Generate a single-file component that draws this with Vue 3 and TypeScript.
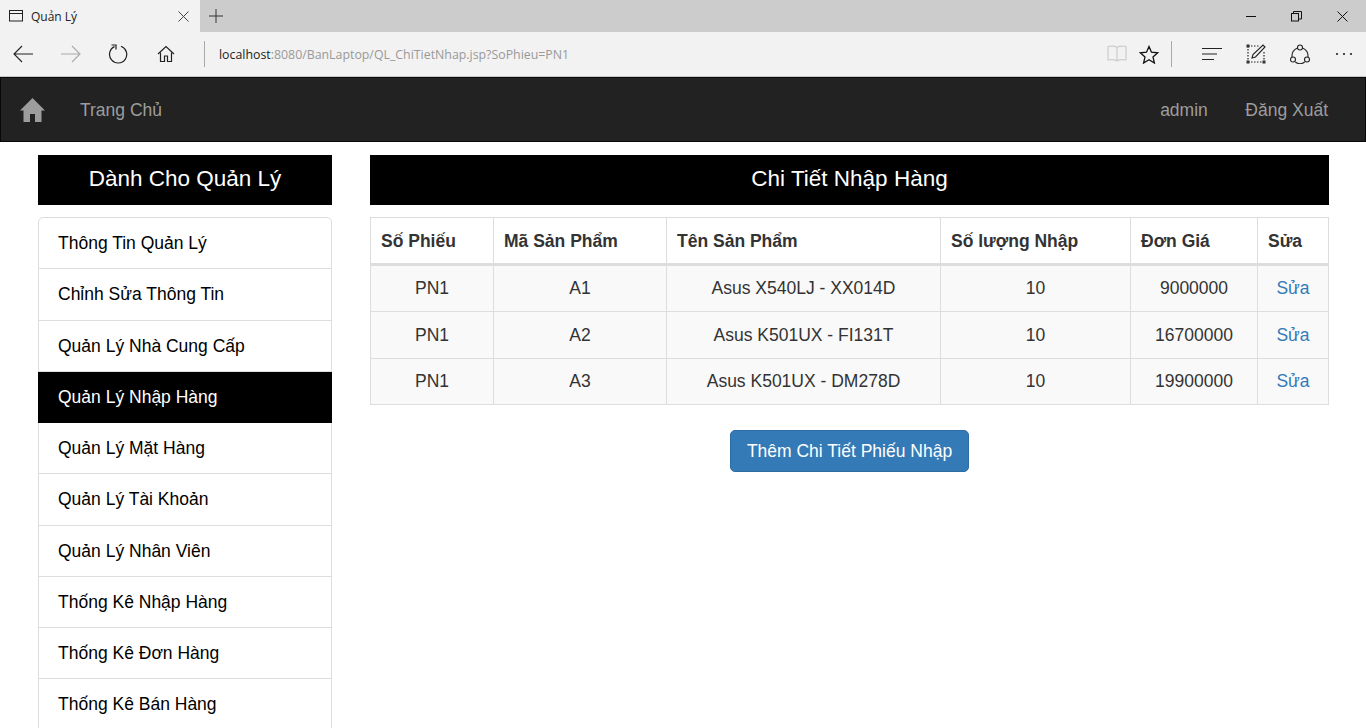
<template>
  <div class="window">
    <!-- Browser chrome -->
    <div class="tab-row">
      <div class="tab">
        <svg class="tab-icon" width="16" height="14" viewBox="0 0 16 14" fill="none" stroke="#222" stroke-width="1">
          <rect x="1.5" y="1.5" width="13" height="10.5" />
          <path d="M1.5 4.5h13" />
        </svg>
        <span class="tab-title">Quản Lý</span>
        <svg class="tab-close" width="11" height="11" viewBox="0 0 11 11" stroke="#444" stroke-width="1">
          <path d="M0.5 0.5l10 10M10.5 0.5l-10 10" />
        </svg>
      </div>
      <svg class="new-tab" width="14" height="14" viewBox="0 0 14 14" stroke="#333" stroke-width="1">
        <path d="M7 0v14M0 7h14" />
      </svg>
      <div class="window-btns">
        <svg width="11" height="11" viewBox="0 0 11 11" stroke="#111" stroke-width="1" fill="none">
          <path d="M1 5.5h10" />
        </svg>
        <svg width="11" height="11" viewBox="0 0 11 11" stroke="#111" stroke-width="1" fill="none">
          <rect x="0.5" y="2.5" width="7" height="7.5" />
          <path d="M2.5 2.5v-2h8v7.5h-3" />
        </svg>
        <svg width="11" height="11" viewBox="0 0 11 11" stroke="#111" stroke-width="1" fill="none">
          <path d="M0.5 0.5l10 10M10.5 0.5l-10 10" />
        </svg>
      </div>
    </div>

    <div class="toolbar">
      <div class="nav-btns">
        <svg width="20" height="18" viewBox="0 0 20 18" fill="none" stroke="#222" stroke-width="1.1">
          <path d="M20 9H1M9 1L1 9l8 8" />
        </svg>
        <svg width="20" height="18" viewBox="0 0 20 18" fill="none" stroke="#aaa" stroke-width="1.1">
          <path d="M0 9h19M11 1l8 8-8 8" />
        </svg>
        <svg class="reload" width="20" height="20" viewBox="0 0 20 20" fill="none" stroke="#222" stroke-width="1.2">
          <path d="M6.5 2.6A8.6 8.6 0 1 0 13 2.3" />
          <path d="M3.5 1H8v4.5" />
        </svg>
        <svg width="18" height="18" viewBox="0 0 18 18" fill="none" stroke="#222" stroke-width="1.2">
          <path d="M1 9l8-7.5L17 9" />
          <path d="M3.5 7.5v9h4V11h3v5.5h4v-9" />
        </svg>
      </div>
      <div class="divider" />
      <div class="address">
        <span class="host">localhost</span>:8080/BanLaptop/QL_ChiTietNhap.jsp?SoPhieu=PN1
      </div>
      <div class="tools-left">
        <svg width="20" height="18" viewBox="0 0 20 18" fill="none" stroke="#ccc" stroke-width="1.2">
          <path d="M10 2.5C8 1 4 1 1 1.5V15c3-.5 7-.5 9 1 2-1.5 6-1.5 9-1V1.5C16 1 12 1 10 2.5zM10 2.5V16" />
        </svg>
        <svg width="20" height="19" viewBox="0 0 20 19" fill="none" stroke="#111" stroke-width="1.3">
          <path d="M10 1.5l2.5 5.7 6.2.6-4.7 4.1 1.4 6.1-5.4-3.2-5.400 3.200 1.400-6.100L1.300 7.800l6.200-.6z" />
        </svg>
      </div>
      <div class="divider" />
      <div class="tools-right">
        <svg width="20" height="14" viewBox="0 0 20 14" stroke="#222" stroke-width="1.2">
          <path d="M0 1.5h20M0 7h15M0 12.5h12" />
        </svg>
        <svg width="20" height="20" viewBox="0 0 20 20" fill="none" stroke="#222">
          <path d="M2 2h11M2 2v16M2 18h16M18 8v10" stroke-dasharray="1.5 1.5" stroke-width="1.2" />
          <rect x="0.5" y="0.5" width="3" height="3" fill="#333" stroke="none" />
          <rect x="0.5" y="16.5" width="3" height="3" fill="#333" stroke="none" />
          <rect x="16.5" y="16.5" width="3" height="3" fill="#333" stroke="none" />
          <path d="M6 14l1-3.5L17 1l2 2-9.5 10z" stroke-width="1.1" />
        </svg>
        <svg width="20" height="20" viewBox="0 0 20 20" fill="none" stroke="#222" stroke-width="1.1">
          <circle cx="10" cy="3.5" r="2.5" />
          <circle cx="3" cy="15.5" r="2.5" />
          <circle cx="17" cy="15.5" r="2.5" />
          <path d="M2.2 13.2A8 8 0 0 1 7.6 3.9M17.8 13.2A8 8 0 0 0 12.4 3.9M5.3 18A8 8 0 0 0 14.7 18" />
        </svg>
        <svg class="more" width="18" height="4" viewBox="0 0 18 4" fill="#222">
          <circle cx="2" cy="2" r="1.1" />
          <circle cx="9" cy="2" r="1.1" />
          <circle cx="16" cy="2" r="1.1" />
        </svg>
      </div>
    </div>

    <!-- Site navbar -->
    <nav class="navbar">
      <svg class="brand" width="25" height="24" viewBox="0 0 25 24" fill="#9d9d9d">
        <path d="M12.5 0L25 12.5h-3.5V24h-6.500v-8h-5v8H3.500V12.500H0z" />
      </svg>
      <a class="nav-link">Trang Chủ</a>
      <div class="nav-right">
        <a class="nav-link">admin</a>
        <a class="nav-link">Đăng Xuất</a>
      </div>
    </nav>

    <!-- Page content -->
    <main class="content">
      <aside class="sidebar">
        <h2 class="panel-title">Dành Cho Quản Lý</h2>
        <ul class="menu">
          <li v-for="item in menuItems" :key="item" class="menu-item" :class="{ active: item === activeItem }">
            {{ item }}
          </li>
        </ul>
      </aside>

      <section class="detail">
        <h2 class="panel-title">Chi Tiết Nhập Hàng</h2>
        <table class="grid">
          <colgroup>
            <col v-for="w in colWidths" :key="w" :style="{ width: w + 'px' }" />
          </colgroup>
          <thead>
            <tr>
              <th v-for="h in headers" :key="h">{{ h }}</th>
            </tr>
          </thead>
          <tbody>
            <tr v-for="row in rows" :key="row.code">
              <td>{{ row.slip }}</td>
              <td>{{ row.code }}</td>
              <td>{{ row.name }}</td>
              <td>{{ row.qty }}</td>
              <td>{{ row.price }}</td>
              <td><a class="edit">Sửa</a></td>
            </tr>
          </tbody>
        </table>
        <div class="actions">
          <button class="btn-add" type="button">Thêm Chi Tiết Phiếu Nhập</button>
        </div>
      </section>
    </main>
  </div>
</template>

<script setup lang="ts">
interface DetailRow {
  slip: string
  code: string
  name: string
  qty: number
  price: number
}

const menuItems: string[] = [
  'Thông Tin Quản Lý',
  'Chỉnh Sửa Thông Tin',
  'Quản Lý Nhà Cung Cấp',
  'Quản Lý Nhập Hàng',
  'Quản Lý Mặt Hàng',
  'Quản Lý Tài Khoản',
  'Quản Lý Nhân Viên',
  'Thống Kê Nhập Hàng',
  'Thống Kê Đơn Hàng',
  'Thống Kê Bán Hàng',
]
const activeItem = 'Quản Lý Nhập Hàng'

const headers: string[] = ['Số Phiếu', 'Mã Sản Phẩm', 'Tên Sản Phẩm', 'Số lượng Nhập', 'Đơn Giá', 'Sửa']
const colWidths: number[] = [123, 173, 274, 190, 127, 71]

const rows: DetailRow[] = [
  { slip: 'PN1', code: 'A1', name: 'Asus X540LJ - XX014D', qty: 10, price: 9000000 },
  { slip: 'PN1', code: 'A2', name: 'Asus K501UX - FI131T', qty: 10, price: 16700000 },
  { slip: 'PN1', code: 'A3', name: 'Asus K501UX - DM278D', qty: 10, price: 19900000 },
]
</script>

<style>
html,
body {
  margin: 0;
  overflow: hidden;
  background: #fff;
}
</style>

<style scoped>
.window {
  height: 728px;
  overflow: hidden;
  font-family: "Liberation Sans", Arial, sans-serif;
  font-size: 17.5px;
  color: #333;
}

/* Browser chrome */

.tab-row {
  display: flex;
  align-items: center;
  height: 32px;
  background: #cccccc;
}

.tab {
  display: flex;
  align-items: center;
  width: 200px;
  height: 32px;
  box-sizing: border-box;
  padding: 0 11px 0 8px;
  background: #f2f2f2;
}

.tab-icon {
  margin-right: 7px;
}

.tab-title {
  flex: 1;
  font-family: "Open Sans", "Noto Sans", sans-serif;
  font-size: 12px;
  color: #222;
}

.new-tab {
  margin-left: 9px;
}

.window-btns {
  display: flex;
  align-items: center;
  gap: 35px;
  margin-left: auto;
  padding-right: 18px;
}

.toolbar {
  display: flex;
  align-items: center;
  height: 44px;
  background: #f2f2f2;
  border-bottom: 1px solid #c8c8c8;
}

.nav-btns {
  display: flex;
  align-items: center;
  gap: 28px;
  width: 204px;
  box-sizing: border-box;
  padding-left: 13px;
}

.reload {
  margin-left: -1px;
  margin-right: 1px;
}

.divider {
  width: 1px;
  height: 26px;
  background: #aaa;
}

.address {
  flex: 1;
  padding-left: 14px;
  font-family: "Open Sans", "Noto Sans", sans-serif;
  font-size: 12.35px;
  color: #999;
}

.host {
  color: #222;
}

.tools-left {
  display: flex;
  align-items: center;
  gap: 12px;
  padding-right: 12px;
}

.tools-right {
  display: flex;
  align-items: center;
  gap: 24px;
  padding: 0 13px 0 30px;
}

.more {
  margin-left: 1px;
}

/* Navbar */

.navbar {
  display: flex;
  align-items: center;
  height: 65px;
  box-sizing: border-box;
  padding: 0 37px 0 19px;
  background: #222;
  border: 1px solid #080808;
}

.brand {
  margin-right: 35px;
}

.nav-link {
  padding-top: 2px;
  color: #9d9d9d;
}

.nav-right {
  display: flex;
  gap: 37.5px;
  margin-left: auto;
}

/* Content */

.content {
  display: flex;
  gap: 38px;
  padding: 13px 37px 0 38px;
}

.sidebar {
  flex: 0 0 294px;
}

.detail {
  flex: 1;
  min-width: 0;
}

.panel-title {
  height: 50px;
  margin: 0 0 12px;
  background: #000;
  color: #fff;
  font-size: 22.5px;
  font-weight: 400;
  line-height: 48px;
  text-align: center;
}

.menu {
  margin: 0;
  padding: 0;
  list-style: none;
  color: #000;
}

.menu-item {
  height: 51.25px;
  box-sizing: border-box;
  padding: 0 19px;
  border: 1px solid #ddd;
  border-top-width: 0;
  line-height: 50px;
}

.menu-item:first-child {
  height: 52.25px;
  border-top-width: 1px;
  border-radius: 5px 5px 0 0;
}

.menu-item.active {
  background: #000;
  border-color: #000;
  color: #fff;
}

/* Table */

.grid {
  width: 958px;
  border-collapse: collapse;
  table-layout: fixed;
}

.grid th,
.grid td {
  box-sizing: border-box;
  border: 1px solid #ddd;
  padding: 0 10px;
}

.grid th {
  height: 47px;
  padding-top: 1px;
  border-bottom-width: 3px;
  color: #333;
  font-weight: 700;
  text-align: left;
}

.grid td {
  height: 47px;
  text-align: center;
}

.grid tbody tr:last-child td {
  height: 46px;
}

.grid tbody tr {
  background: #f9f9f9;
}

.edit {
  color: #337ab7;
}

.actions {
  display: flex;
  justify-content: center;
  margin-top: 25px;
}

.btn-add {
  height: 42px;
  padding: 0 15.5px;
  background: #337ab7;
  border: 1px solid #2e6da4;
  border-radius: 5px;
  color: #fff;
  font: inherit;
}
</style>
